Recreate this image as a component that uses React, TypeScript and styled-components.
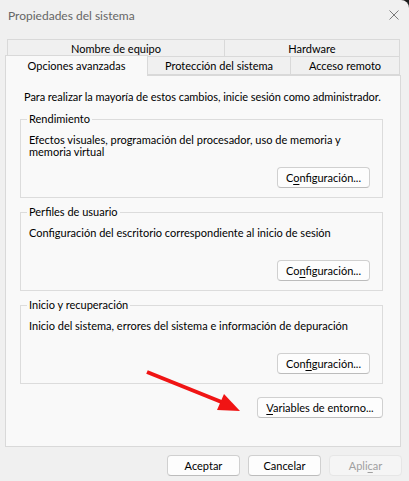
import React from 'react';
import styled, { createGlobalStyle } from 'styled-components';

const GlobalStyle = createGlobalStyle`
  html, body {
    margin: 0;
    padding: 0;
    background: #1c1c1c;
  }
  body {
    font-family: Lato, "Liberation Sans", sans-serif;
    font-size: 11px;
    color: #000;
  }
  * {
    box-sizing: border-box;
  }
`;

const Window = styled.div`
  position: relative;
  width: 409px;
  height: 481px;
  background: #f0f0f0;
  border-top-right-radius: 8px;
  display: flex;
  flex-direction: column;
  overflow: hidden;
`;

const TitleBar = styled.div`
  height: 30px;
  display: flex;
  align-items: center;
  justify-content: space-between;
  padding: 0 10px 0 8px;
`;

const Title = styled.span`
  color: #666;
  font-size: 12px;
`;

const CloseButton = styled.svg`
  width: 10px;
  height: 10px;
  margin-top: -1px;
`;

const TabStrip = styled.div`
  margin-top: 9px;
  display: flex;
  flex-direction: column;
`;

const TabRow = styled.div<{ $inset: number; $height: number }>`
  display: flex;
  align-items: flex-end;
  height: ${({ $height }) => $height}px;
  margin-left: ${({ $inset }) => $inset}px;
`;

const Tab = styled.div<{ $width: number; $active?: boolean }>`
  position: relative;
  z-index: ${({ $active }) => ($active ? 2 : 1)};
  flex: none;
  width: ${({ $width }) => $width}px;
  height: ${({ $active }) => ($active ? 21 : 19)}px;
  margin-bottom: ${({ $active }) => ($active ? -1 : 0)}px;
  & + & {
    margin-left: -1px;
  }
  display: flex;
  align-items: center;
  justify-content: center;
  padding-bottom: ${({ $active }) => ($active ? 2 : 0)}px;
  background: ${({ $active }) => ($active ? '#f9f9f9' : '#f0f0f0')};
  border: 1px solid #d9d9d9;
  border-bottom: ${({ $active }) => ($active ? 'none' : '1px solid #d9d9d9')};
  white-space: nowrap;
`;

const Panel = styled.div`
  margin-left: 5px;
  width: 396px;
  height: 372px;
  background: #f9f9f9;
  border: 1px solid #d9d9d9;
  padding: 13px 17px 0 14px;
  display: flex;
  flex-direction: column;
`;

const Intro = styled.p`
  margin: 0 0 0 4px;
  line-height: 16px;
  white-space: nowrap;
  letter-spacing: -0.05px;
`;

const Group = styled.fieldset`
  margin: 6px 0 0;
  padding: 6px 12px 9px 8px;
  border: 1px solid #dcdcdc;
  min-width: 0;
  display: flex;
  flex-direction: column;
`;

const Legend = styled.legend`
  margin-left: -2px;
  padding: 0 2px;
  line-height: 16px;
`;

const Description = styled.p`
  margin: 0;
  min-height: 34px;
  line-height: 12px;
  padding-top: 1px;
`;

const Button = styled.button<{ $width: number; $disabled?: boolean }>`
  width: ${({ $width }) => $width}px;
  height: 21px;
  padding: 0;
  font: inherit;
  color: ${({ $disabled }) => ($disabled ? '#a0a0a0' : '#000')};
  background: ${({ $disabled }) => ($disabled ? '#f5f5f5' : '#fdfdfd')};
  border: 1px solid ${({ $disabled }) => ($disabled ? '#e6e6e6' : '#d0d0d0')};
  border-bottom-color: ${({ $disabled }) => ($disabled ? '#e6e6e6' : '#bcbcbc')};
  border-radius: 4px;
  white-space: nowrap;
`;

const GroupActions = styled.div`
  display: flex;
  justify-content: flex-end;
`;

const PanelActions = styled.div`
  display: flex;
  justify-content: flex-end;
  margin-top: 13px;
`;

const DialogActions = styled.div`
  display: flex;
  justify-content: flex-end;
  gap: 8px;
  margin-top: 8px;
  padding-right: 7px;
`;

const Key = styled.span`
  text-decoration: underline;
  text-underline-offset: 2px;
`;

const Annotation = styled.svg`
  position: absolute;
  left: 0;
  top: 0;
  width: 409px;
  height: 481px;
  pointer-events: none;
`;

const SettingsButton = ({ at }: { at: number }) => {
  const label = 'Configuración...';
  return (
    <GroupActions>
      <Button $width={93}>
        {label.slice(0, at)}
        <Key>{label[at]}</Key>
        {label.slice(at + 1)}
      </Button>
    </GroupActions>
  );
};

const groups = [
  {
    title: 'Rendimiento',
    text: 'Efectos visuales, programación del procesador, uso de memoria y memoria virtual',
    key: 1,
  },
  {
    title: 'Perfiles de usuario',
    text: 'Configuración del escritorio correspondiente al inicio de sesión',
    key: 2,
  },
  {
    title: 'Inicio y recuperación',
    text: 'Inicio del sistema, errores del sistema e información de depuración',
    key: 3,
  },
];

const App: React.FC = () => {
  return (
    <>
      <GlobalStyle />
      <Window>
        <TitleBar>
          <Title>Propiedades del sistema</Title>
          <CloseButton viewBox="0 0 10 10">
            <path d="M0.5 0.5 L9.5 9.5 M9.5 0.5 L0.5 9.5" stroke="#7a7a7a" strokeWidth="1" fill="none" />
          </CloseButton>
        </TitleBar>

        <TabStrip>
          <TabRow $inset={7} $height={19}>
            <Tab $width={218}>Nombre de equipo</Tab>
            <Tab $width={176}>Hardware</Tab>
          </TabRow>
          <TabRow $inset={5} $height={17}>
            <Tab $width={143} $active>
              Opciones avanzadas
            </Tab>
            <Tab $width={144}>Protección del sistema</Tab>
            <Tab $width={110}>Acceso remoto</Tab>
          </TabRow>
        </TabStrip>

        <Panel>
          <Intro>Para realizar la mayoría de estos cambios, inicie sesión como administrador.</Intro>
          {groups.map((g) => (
            <Group key={g.title}>
              <Legend>{g.title}</Legend>
              <Description>{g.text}</Description>
              <SettingsButton at={g.key} />
            </Group>
          ))}
          <PanelActions>
            <Button $width={126}>
              <Key>V</Key>ariables de entorno...
            </Button>
          </PanelActions>
        </Panel>

        <DialogActions>
          <Button $width={73}>Aceptar</Button>
          <Button $width={73}>Cancelar</Button>
          <Button $width={73} $disabled>
            Apli<Key>c</Key>ar
          </Button>
        </DialogActions>

        <Annotation viewBox="0 0 409 481">
          <line x1="147" y1="372" x2="224" y2="403" stroke="#f01414" strokeWidth="4" />
          <polygon points="240,411 217,410 224,394" fill="#f01414" />
        </Annotation>
      </Window>
    </>
  );
};

export default App;
